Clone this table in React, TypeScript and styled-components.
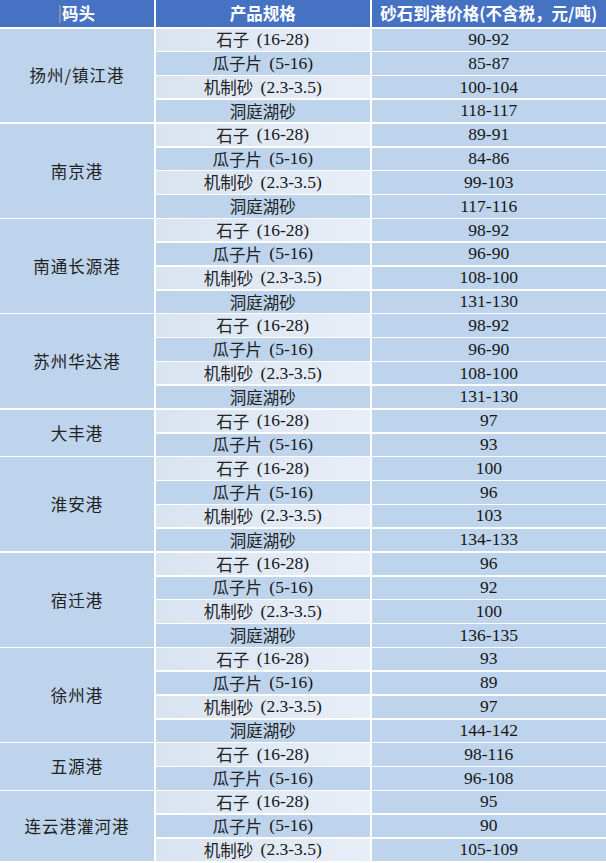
import React from "react";
import styled, { createGlobalStyle } from "styled-components";

const GlobalStyle = createGlobalStyle`
  html, body {
    margin: 0;
    padding: 0;
    background: #ffffff;
    overflow: hidden;
  }
`;

type Spec = { name: string; price: string };
type Port = { name: string; specs: Spec[] };

const SHIZI = "石子 (16-28)";
const GUAZI = "瓜子片 (5-16)";
const JIZHI = "机制砂 (2.3-3.5)";
const DONGTING = "洞庭湖砂";

const ports: Port[] = [
  {
    name: "扬州/镇江港",
    specs: [
      { name: SHIZI, price: "90-92" },
      { name: GUAZI, price: "85-87" },
      { name: JIZHI, price: "100-104" },
      { name: DONGTING, price: "118-117" },
    ],
  },
  {
    name: "南京港",
    specs: [
      { name: SHIZI, price: "89-91" },
      { name: GUAZI, price: "84-86" },
      { name: JIZHI, price: "99-103" },
      { name: DONGTING, price: "117-116" },
    ],
  },
  {
    name: "南通长源港",
    specs: [
      { name: SHIZI, price: "98-92" },
      { name: GUAZI, price: "96-90" },
      { name: JIZHI, price: "108-100" },
      { name: DONGTING, price: "131-130" },
    ],
  },
  {
    name: "苏州华达港",
    specs: [
      { name: SHIZI, price: "98-92" },
      { name: GUAZI, price: "96-90" },
      { name: JIZHI, price: "108-100" },
      { name: DONGTING, price: "131-130" },
    ],
  },
  {
    name: "大丰港",
    specs: [
      { name: SHIZI, price: "97" },
      { name: GUAZI, price: "93" },
    ],
  },
  {
    name: "淮安港",
    specs: [
      { name: SHIZI, price: "100" },
      { name: GUAZI, price: "96" },
      { name: JIZHI, price: "103" },
      { name: DONGTING, price: "134-133" },
    ],
  },
  {
    name: "宿迁港",
    specs: [
      { name: SHIZI, price: "96" },
      { name: GUAZI, price: "92" },
      { name: JIZHI, price: "100" },
      { name: DONGTING, price: "136-135" },
    ],
  },
  {
    name: "徐州港",
    specs: [
      { name: SHIZI, price: "93" },
      { name: GUAZI, price: "89" },
      { name: JIZHI, price: "97" },
      { name: DONGTING, price: "144-142" },
    ],
  },
  {
    name: "五源港",
    specs: [
      { name: SHIZI, price: "98-116" },
      { name: GUAZI, price: "96-108" },
    ],
  },
  {
    name: "连云港灌河港",
    specs: [
      { name: SHIZI, price: "95" },
      { name: GUAZI, price: "90" },
      { name: JIZHI, price: "105-109" },
    ],
  },
];

const totalRows = ports.reduce((n, p) => n + p.specs.length, 0);

const Sheet = styled.div<{ $rows: number }>`
  display: grid;
  width: 606px;
  grid-template-columns: 154px 214.5px 1fr;
  grid-template-rows: 27px repeat(${(p) => p.$rows}, 22.33px);
  column-gap: 1.5px;
  row-gap: 1.5px;
  background: #ffffff;
  font-family: "Liberation Serif", "Noto Sans CJK SC", serif;
  font-size: 17.5px;
  color: #161616;
`;

const HeadCell = styled.div`
  background: #4672c4;
  color: #ffffff;
  font-family: "Noto Sans CJK SC", "Liberation Sans", sans-serif;
  font-weight: 700;
  font-size: 16.5px;
  display: flex;
  align-items: center;
  justify-content: center;
  white-space: nowrap;
  line-height: 1;
`;

const Caret = styled.span`
  display: inline-block;
  width: 2px;
  height: 18px;
  background: #8a8f99;
  margin-right: 1px;
`;

const PortCell = styled.div<{ $row: number; $span: number }>`
  grid-column: 1;
  grid-row: ${(p) => p.$row} / span ${(p) => p.$span};
  background: #bdd4ec;
  display: flex;
  align-items: center;
  justify-content: center;
  font-family: "Noto Sans CJK SC", serif;
  font-size: 16.5px;
  color: #222;
  letter-spacing: 1px;
`;

const SpecCell = styled.div<{ $row: number; $light: boolean }>`
  grid-column: 2;
  grid-row: ${(p) => p.$row};
  background: ${(p) =>
    p.$light ? "linear-gradient(90deg, #d9e4f1 0%, #e7eef8 100%)" : "#bdd4ec"};
  display: flex;
  align-items: center;
  justify-content: center;
  white-space: pre;
  line-height: 1;
`;

const SpecName = styled.span`
  font-family: "Noto Sans CJK SC", serif;
  font-size: 16.5px;
  color: #222;
`;

const SpecSize = styled.span`
  font-family: "Liberation Serif", serif;
  margin-left: 3px;
`;

const PriceCell = styled.div<{ $row: number }>`
  grid-column: 3;
  grid-row: ${(p) => p.$row};
  background: #bdd4ec;
  display: flex;
  align-items: center;
  justify-content: center;
  line-height: 1;
`;

function SpecLabel({ text }: { text: string }) {
  const i = text.indexOf(" (");
  if (i < 0) return <SpecName>{text}</SpecName>;
  return (
    <>
      <SpecName>{text.slice(0, i)}</SpecName>
      <SpecSize>{text.slice(i)}</SpecSize>
    </>
  );
}

export default function App() {
  let row = 2;
  let idx = 0;
  const cells: React.ReactNode[] = [];

  ports.forEach((port) => {
    cells.push(
      <PortCell key={port.name} $row={row} $span={port.specs.length}>
        {port.name}
      </PortCell>
    );
    port.specs.forEach((s, j) => {
      const r = row + j;
      cells.push(
        <SpecCell key={`${port.name}-s${j}`} $row={r} $light={idx % 2 === 0}>
          <SpecLabel text={s.name} />
        </SpecCell>,
        <PriceCell key={`${port.name}-p${j}`} $row={r}>
          {s.price}
        </PriceCell>
      );
      idx++;
    });
    row += port.specs.length;
  });

  return (
    <>
      <GlobalStyle />
      <Sheet $rows={totalRows}>
        <HeadCell>
          <Caret />
          码头
        </HeadCell>
        <HeadCell>产品规格</HeadCell>
        <HeadCell>砂石到港价格(不含税，元/吨)</HeadCell>
        {cells}
      </Sheet>
    </>
  );
}
